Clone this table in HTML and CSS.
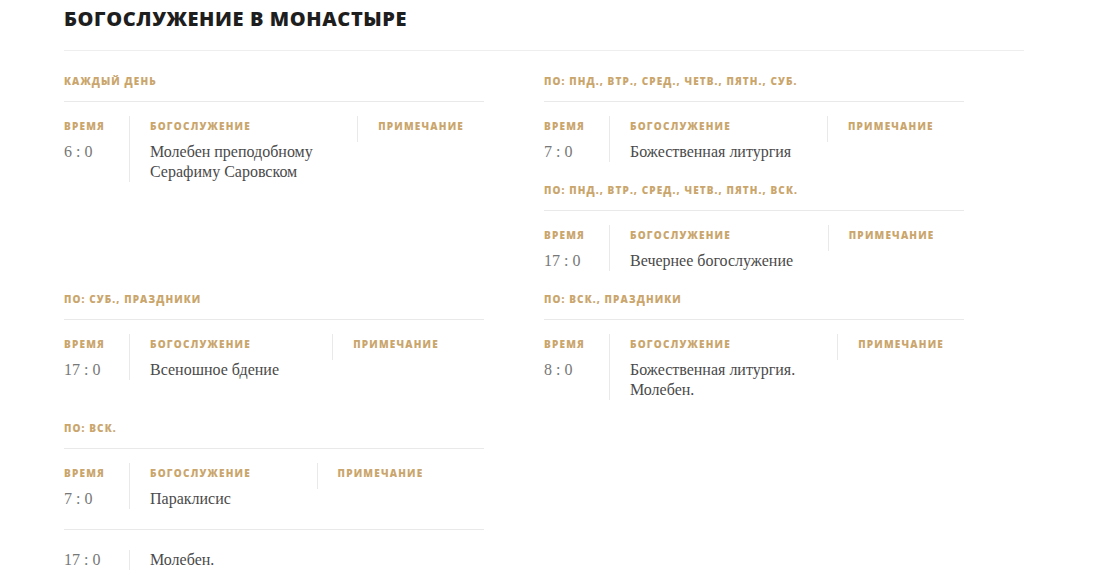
FILE: index.html
```html
<!DOCTYPE html>
<html lang="ru">
  <head>
    <meta charset="UTF-8" />
    <meta name="viewport" content="width=device-width, initial-scale=1.0" />
    <title>Богослужение в монастыре</title>
    <link rel="stylesheet" href="styles.css">
  </head>
  <body>
    <div class="schedule-page">
      <h2 class="page-title">Богослужение в монастыре</h2>

      <div class="schedule-grid">
        <!-- Row 1 -->
        <div class="schedule-cell">
          <div class="schedule">
            <h4 class="schedule-days">Каждый день</h4>
            <table class="services">
              <thead>
                <tr><th>Время</th><th>Богослужение</th><th>Примечание</th></tr>
              </thead>
              <tbody>
                <tr><td>6 : 0</td><td>Молебен преподобному Серафиму Саровском</td></tr>
              </tbody>
            </table>
          </div>
        </div>

        <div class="schedule-cell">
          <div class="schedule">
            <h4 class="schedule-days">По: пнд., втр., сред., четв., пятн., суб.</h4>
            <table class="services">
              <thead>
                <tr><th>Время</th><th>Богослужение</th><th>Примечание</th></tr>
              </thead>
              <tbody>
                <tr><td>7 : 0</td><td>Божественная литургия</td></tr>
              </tbody>
            </table>
          </div>
          <div class="schedule">
            <h4 class="schedule-days">По: пнд., втр., сред., четв., пятн., вск.</h4>
            <table class="services">
              <thead>
                <tr><th>Время</th><th>Богослужение</th><th>Примечание</th></tr>
              </thead>
              <tbody>
                <tr><td>17 : 0</td><td>Вечернее богослужение</td></tr>
              </tbody>
            </table>
          </div>
        </div>

        <!-- Row 2 -->
        <div class="schedule-cell">
          <div class="schedule">
            <h4 class="schedule-days">По: суб., праздники</h4>
            <table class="services">
              <thead>
                <tr><th>Время</th><th>Богослужение</th><th>Примечание</th></tr>
              </thead>
              <tbody>
                <tr><td>17 : 0</td><td>Всеношное бдение</td></tr>
              </tbody>
            </table>
          </div>
        </div>

        <div class="schedule-cell">
          <div class="schedule">
            <h4 class="schedule-days">По: вск., праздники</h4>
            <table class="services">
              <thead>
                <tr><th>Время</th><th>Богослужение</th><th>Примечание</th></tr>
              </thead>
              <tbody>
                <tr><td>8 : 0</td><td>Божественная литургия. Молебен.</td></tr>
              </tbody>
            </table>
          </div>
        </div>

        <!-- Row 3 -->
        <div class="schedule-cell">
          <div class="schedule">
            <h4 class="schedule-days">По: вск.</h4>
            <table class="services">
              <thead>
                <tr><th>Время</th><th>Богослужение</th><th>Примечание</th></tr>
              </thead>
              <tbody>
                <tr><td>7 : 0</td><td>Параклисис</td></tr>
              </tbody>
            </table>
            <div class="services-more">
              <table class="services">
                <tbody>
                  <tr><td>17 : 0</td><td>Молебен.</td></tr>
                </tbody>
              </table>
            </div>
          </div>
        </div>
      </div>
    </div>
  </body>
</html>
```

FILE: styles.css
```css
body {
  margin: 0;
  background: #fff;
  font-family: "Liberation Serif", "Times New Roman", serif;
  color: #4a4a4a;
}

.schedule-page {
  width: 960px;
  margin-left: 64px;
}

.page-title {
  margin: 0;
  padding: 4px 0 16px;
  line-height: 30px;
  font-family: "Open Sans", Arial, sans-serif;
  font-size: 20px;
  font-weight: 800;
  letter-spacing: 0.6px;
  text-transform: uppercase;
  color: #1e1e1e;
  border-bottom: 1px solid #eeeeee;
}

.schedule-grid {
  display: grid;
  grid-template-columns: 420px 420px;
  column-gap: 60px;
  row-gap: 21px;
  margin-top: 23px;
  align-items: start;
}

.schedule + .schedule {
  margin-top: 21px;
}

.schedule-days {
  margin: 0;
  padding-bottom: 13px;
  line-height: 14px;
  font-family: "Open Sans", Arial, sans-serif;
  font-size: 10px;
  font-weight: 800;
  letter-spacing: 1.1px;
  text-transform: uppercase;
  color: #caa66d;
  border-bottom: 1px solid #e9e9e9;
}

.services {
  width: 100%;
  margin-top: 14px;
  border-collapse: collapse;
  border-spacing: 0;
}

.services th {
  padding: 3px 20px 9px;
  line-height: 14px;
  text-align: left;
  font-family: "Open Sans", Arial, sans-serif;
  font-size: 10px;
  font-weight: 800;
  letter-spacing: 1.2px;
  text-transform: uppercase;
  color: #caa66d;
  white-space: nowrap;
}

.services td {
  padding: 0 20px;
  line-height: 20px;
  font-size: 16px;
  vertical-align: top;
  color: #4a4a4a;
}

.services th + th,
.services td + td {
  border-left: 1px solid #e9e9e9;
}

.services th:first-child,
.services td:first-child {
  width: 45px;
  padding-left: 0;
  white-space: nowrap;
}

.services td:first-child {
  color: #777;
}

.services-more {
  margin-top: 20px;
  padding-top: 20px;
  border-top: 1px solid #e9e9e9;
}

.services-more .services {
  margin-top: 0;
}
```
